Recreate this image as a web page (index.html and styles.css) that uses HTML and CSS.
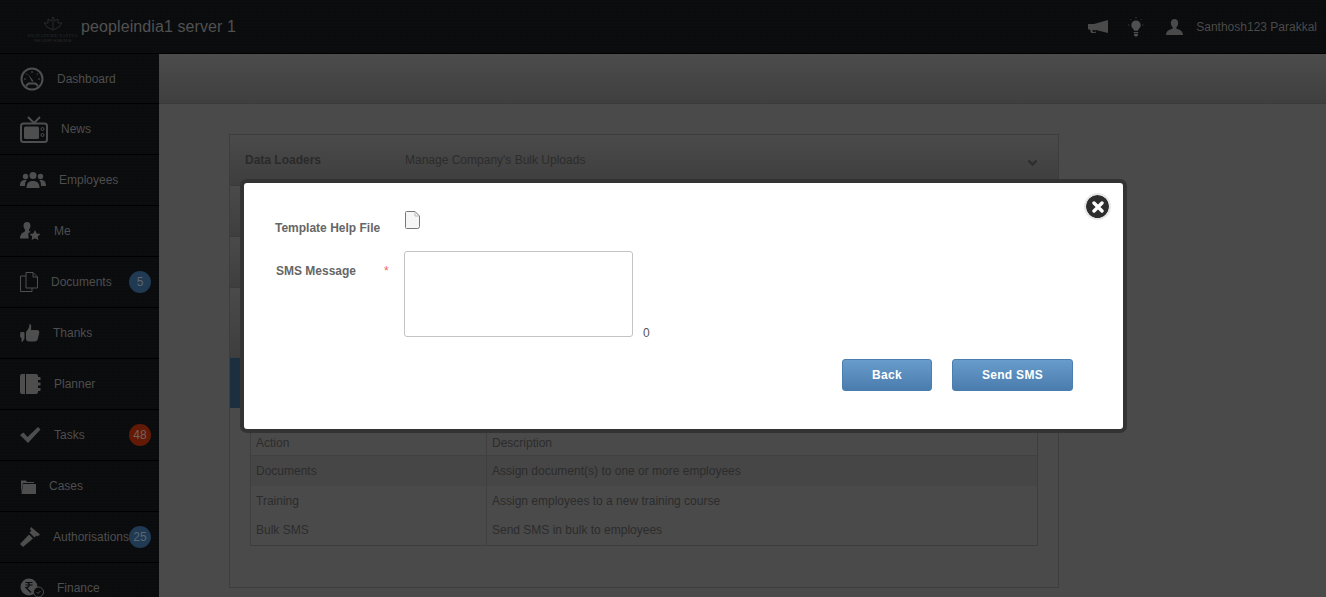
FILE: index.html
```html
<!DOCTYPE html>
<html lang="en">
<head>
<meta charset="UTF-8" />
<title>peopleindia1 server 1</title>
<link rel="stylesheet" href="styles.css">
</head>
<body>
<header class="topbar">
  <div class="logo">
    <svg class="logo-mark" width="18" height="14" viewBox="0 0 18 14"><path d="M9 0l2 4 3-2 0 4 4 0-3 4-6 3-6-3-3-4 4 0 0-4 3 2z" fill="none" stroke="#2b2b2b"/><path d="M9 3v9" stroke="#2b2b2b"/></svg>
    <div class="logo-name">SIGNATURE SATIVA</div>
    <div class="logo-sub">THE LUXURY HOME INDIA</div>
  </div>
  <div class="brand">peopleindia1 server 1</div>
  <div class="top-icons">
    <svg width="20" height="14" viewBox="0 0 20 14"><path d="M20 0v13L8 10H7l1 3H3L2 9.500H0V4h6z" fill="#4a4a4a"/><path d="M4.500 10h2l.7 2H5z" fill="#0a0b0d"/></svg>
    <svg width="16" height="20" viewBox="0 0 16 20"><path d="M8 3.500a4.700 4.700 0 0 0-3 8.300c.7.600 1 1.200 1 2h4c0-.8.300-1.400 1-2a4.700 4.700 0 0 0-3-8.300zM5.700 15h4.600v1.300H5.700zM6 17h4v1.200L9 19.500H7L6 18.200z" fill="#4f4f4f"/><path d="M8 0v2M2.300 2.300l1.300 1.300M13.700 2.300l-1.300 1.300M0 8h2M14 8h2" stroke="#3a3a3a" stroke-dasharray="1 .6"/></svg>
    <svg width="17" height="16" viewBox="0 0 17 16"><path d="M8.500 0c2.400 0 3.700 1.800 3.700 4 0 1.700-.8 3.300-1.800 4.200v1.600c2.500.7 6.600 1.800 6.600 6.200H0c0-4.400 4.100-5.500 6.600-6.200V8.200C5.600 7.300 4.800 5.700 4.800 4c0-2.200 1.300-4 3.700-4z" fill="#4a4a4a"/></svg>
    <span class="user-name">Santhosh123 Parakkal</span>
  </div>
</header>

<div class="layout">
  <nav class="sidebar">
    <a class="nav-item">
      <svg width="24" height="24" viewBox="0 0 24 24"><circle cx="12" cy="12" r="10.500" fill="none" stroke="#4e4e4e" stroke-width="2"/><path d="M8 7l5.500 7-1.500 1z" fill="#4e4e4e"/><path d="M12 4v2M6 6.500l1.300 1.300M18 6.500l-1.300 1.300M4 12h2M18 12h2" stroke="#4e4e4e"/><path d="M6 19l2.500-2.500h7L18 19" fill="none" stroke="#4e4e4e" stroke-width="2"/></svg>
      <span>Dashboard</span>
    </a>
    <a class="nav-item">
      <svg width="28" height="27" viewBox="0 0 28 27"><path d="M8 1l6 6 6-6" fill="none" stroke="#4e4e4e" stroke-width="2"/><rect x="1" y="7.500" width="26" height="18.500" rx="2.500" fill="none" stroke="#4e4e4e" stroke-width="2"/><rect x="4" y="10.500" width="15" height="12.500" rx="1.500" fill="#4e4e4e"/><circle cx="22.500" cy="13" r="1.500" fill="none" stroke="#4e4e4e"/><circle cx="22.500" cy="19" r="1.500" fill="none" stroke="#4e4e4e"/></svg>
      <span>News</span>
    </a>
    <a class="nav-item">
      <svg width="26" height="16" viewBox="0 0 26 16"><circle cx="13" cy="3.500" r="3.500" fill="#4e4e4e"/><path d="M6.500 16c0-4.500 2-7 6.500-7s6.500 2.500 6.500 7z" fill="#4e4e4e"/><circle cx="5.500" cy="4.500" r="2.700" fill="#4e4e4e"/><circle cx="20.500" cy="4.500" r="2.700" fill="#4e4e4e"/><path d="M0 14c0-4 1.500-6 5-6 .8 0 1.200.1 1.700.3C5.400 9.500 5 11.500 5 14zM26 14c0-4-1.500-6-5-6-.8 0-1.200.1-1.700.3 1.300 1.200 1.700 3.200 1.700 5.700z" fill="#4e4e4e"/></svg>
      <span>Employees</span>
    </a>
    <a class="nav-item">
      <svg width="21" height="18" viewBox="0 0 21 18"><path d="M7 0c2.300 0 3.500 1.600 3.500 3.700 0 1.500-.7 2.900-1.500 3.800v1.400l1.700.6-2.500 2 .5 5H0c0-5 3.500-6.400 5-7V7.500C4.200 6.600 3.500 5.200 3.500 3.700 3.500 1.600 4.700 0 7 0z" fill="#4e4e4e"/><path d="M15 8l1.700 3.500 3.800.5-2.800 2.600.7 3.400-3.400-1.800-3.400 1.800.7-3.400L9.500 12l3.800-.5z" fill="#4e4e4e"/></svg>
      <span>Me</span>
    </a>
    <a class="nav-item">
      <svg width="18" height="20" viewBox="0 0 18 20"><path d="M6 .5h7l4.500 4.500v11H6zM13 .5V5h4.500" fill="none" stroke="#4e4e4e"/><path d="M6 4H.5v15.500H12V16" fill="none" stroke="#4e4e4e"/></svg>
      <span>Documents</span>
      <b class="badge badge-blue">5</b>
    </a>
    <a class="nav-item">
      <svg width="20" height="18" viewBox="0 0 20 18"><path d="M9.500 0c1.500 0 2 1.500 1.700 3.500L11 6h6c1.500 0 2.500 1 2.300 2.500l-1.500 6.500c-.3 1.500-1.500 2.500-3 2.500H9c-2 0-3-1-3-3V8c1.500-2 3.500-4 3.500-8z" fill="#4e4e4e"/><path d="M.5 8h3.200L4.500 9v5.500L2.500 18l-1-.5V14c-1-.5-1.500-1.500-1.500-2.500z" fill="#4e4e4e"/></svg>
      <span>Thanks</span>
    </a>
    <a class="nav-item">
      <svg width="21" height="20" viewBox="0 0 21 20"><path d="M2 0h3v20H2a2 2 0 0 1-2-2V2a2 2 0 0 1 2-2zM6 0h10a2 2 0 0 1 2 2v16a2 2 0 0 1-2 2H6z" fill="#4e4e4e"/><path d="M18 3h2.500v3H18zM18 8.500h2.500v3H18zM18 14h2.500v3H18z" fill="#4e4e4e"/></svg>
      <span>Planner</span>
    </a>
    <a class="nav-item">
      <svg width="21" height="16" viewBox="0 0 21 16"><path d="M0 8l3.500-2.500L7.500 10 18 0l2.500 2.500L8 16z" fill="#4e4e4e"/></svg>
      <span>Tasks</span>
      <b class="badge badge-red">48</b>
    </a>
    <a class="nav-item">
      <svg width="16" height="15" viewBox="0 0 16 15"><path d="M1 1.500h5l1 1.500h7v1H3L1 14z" fill="#4e4e4e"/><path d="M3 5h13v10H1.500z" fill="#4e4e4e"/></svg>
      <span>Cases</span>
    </a>
    <a class="nav-item">
      <svg width="20" height="20" viewBox="0 0 20 20"><path d="M11 0l9 7.500-2.500 2-1-1-2 2-5-5 2-2-1.500-1z" fill="#4e4e4e"/><path d="M9 7.500l4 4L3 20l-3-3z" fill="#4e4e4e"/></svg>
      <span>Authorisations</span>
      <b class="badge badge-blue">25</b>
    </a>
    <a class="nav-item">
      <svg width="24" height="20" viewBox="0 0 24 20"><circle cx="9" cy="9" r="8.500" fill="#4e4e4e"/><path d="M5.500 4.500h7M5.500 7h7M7 4.500c3 0 3.500 5-1 5l5 5" fill="none" stroke="#0a0b0d" stroke-width="1.200"/><circle cx="18.500" cy="14" r="5" fill="#0a0b0d" stroke="#4e4e4e"/><path d="M16.500 14l1.500 1.500 2.500-2.500" fill="none" stroke="#4e4e4e"/></svg>
      <span>Finance</span>
    </a>
  </nav>

  <main class="content">
    <div class="subheader"></div>
    <section class="panel">
      <div class="panel-row">
        <strong class="panel-title">Data Loaders</strong>
        <span class="panel-desc">Manage Company's Bulk Uploads</span>
        <svg class="chevron" width="11" height="8" viewBox="0 0 11 8"><path d="M1.500 1.500l4 4 4-4" fill="none" stroke="#2e2e2e" stroke-width="2.400"/></svg>
      </div>
      <div class="panel-row"></div>
      <div class="panel-row"></div>
      <div class="panel-row panel-row-tall"></div>
      <div class="panel-row panel-row-active"></div>
      <table class="actions">
        <tr><th>Action</th><th>Description</th></tr>
        <tr><td>Documents</td><td>Assign document(s) to one or more employees</td></tr>
        <tr><td>Training</td><td>Assign employees to a new training course</td></tr>
        <tr><td>Bulk SMS</td><td>Send SMS in bulk to employees</td></tr>
      </table>
    </section>
  </main>
</div>

<div class="modal">
  <button class="modal-close" type="button" aria-label="Close">
    <svg width="12" height="12" viewBox="0 0 12 12"><path d="M2 2l8 8M10 2l-8 8" stroke="#fff" stroke-width="3.400" stroke-linecap="round"/></svg>
  </button>
  <form class="modal-form">
    <div class="field field-file">
      <label class="field-label">Template Help File</label>
      <svg class="file-icon" width="15" height="18" viewBox="0 0 15 18"><path d="M1.500.5h8.500l4.500 4.500v10.500a2 2 0 0 1-2 2h-11a1 1 0 0 1-1-1V1.500a1 1 0 0 1 1-1z" fill="#f6f6f6" stroke="#777"/><path d="M10 .5V5h4.500" fill="none" stroke="#bbb"/></svg>
    </div>
    <div class="field field-message">
      <label class="field-label">SMS Message</label>
      <span class="required">*</span>
      <textarea class="message-box"></textarea>
      <span class="counter">0</span>
    </div>
    <div class="modal-actions">
      <button class="btn btn-back" type="button">Back</button>
      <button class="btn btn-send" type="button">Send SMS</button>
    </div>
  </form>
</div>
</body>
</html>
```
FILE: styles.css
```css
* {
  box-sizing: border-box;
}
html, body {
  height: 100%;
}
body {
  margin: 0;
  height: 597px;
  overflow: hidden;
  font-family: "Liberation Sans", Arial, sans-serif;
  font-size: 12px;
  background-color: #4a4a4a;
  color: #2c2c2c;
  position: relative;
}

/* top bar */
.topbar {
  height: 54px;
  display: flex;
  align-items: center;
  background-color: #0a0b0d;
  background-image: repeating-linear-gradient(0deg, #0c0d0f 0 1px, transparent 1px 3px), repeating-linear-gradient(90deg, #0c0d0f 0 1px, transparent 1px 3px);
  border-bottom: 1px solid #000;
}
.logo {
  width: 81px;
  margin-left: 0;
  padding-top: 6px;
  padding-left: 24px;
  text-align: center;
  color: #2b2b2b;
  line-height: 1;
  white-space: nowrap;
}
.logo-mark {
  display: block;
  margin: 0 auto 2px;
}
.logo-name {
  font-family: "Liberation Serif", serif;
  font-size: 5px;
  letter-spacing: 0.3px;
}
.logo-sub {
  font-size: 3px;
  margin-top: 2px;
}
.brand {
  font-size: 16px;
  color: #515151;
  font-weight: normal;
  letter-spacing: 0.1px;
}
.top-icons {
  margin-left: auto;
  display: flex;
  align-items: center;
  padding-right: 9px;
}
.top-icons svg:nth-child(1) {
  margin-right: 20px;
}
.top-icons svg:nth-child(2) {
  margin-right: 22px;
}
.user-name {
  margin-left: 13px;
  color: #4a4a4a;
}

.layout {
  display: grid;
  grid-template-columns: 159px 1fr;
}

/* sidebar */
.sidebar {
  background-color: #0a0b0d;
  background-image: repeating-linear-gradient(0deg, #0c0d0f 0 1px, transparent 1px 3px), repeating-linear-gradient(90deg, #0c0d0f 0 1px, transparent 1px 3px);
}
.nav-item {
  height: 51px;
  padding-left: 20px;
  display: flex;
  align-items: center;
  gap: 13px;
  border-bottom: 1px solid #000;
  color: #4e4e4e;
  position: relative;
  white-space: nowrap;
}
.nav-item:first-child {
  height: 50px;
}
.nav-item svg {
  flex: none;
}
.badge {
  position: absolute;
  left: 129px;
  top: 14px;
  width: 22px;
  height: 22px;
  border-radius: 50%;
  text-align: center;
  line-height: 22px;
  font-weight: normal;
  color: #5c6670;
}
.badge-blue {
  background-color: #1f3a52;
}
.badge-red {
  background-color: #621a06;
  color: #74625c;
}

/* page behind the dialog */
.content {
  min-width: 0;
}
.subheader {
  height: 50px;
  background-image: linear-gradient(#4c4c4c, #3f3f3f);
  border-bottom: 1px solid #3b3b3b;
}
.panel {
  width: 830px;
  height: 454px;
  margin: 30px 0 0 70px;
  border: 1px solid #3d3d3d;
}
.panel-row {
  height: 51px;
  display: flex;
  align-items: center;
  padding: 0 20px 0 15px;
  background-image: linear-gradient(#4a4a4a, #3e3e3e);
  border-bottom: 1px solid #3b3b3b;
}
.panel-row-tall {
  height: 70px;
  border-bottom: 0;
}
.panel-row-active {
  height: 50px;
  background-image: none;
  background-color: #1c2f40;
  border-bottom: 0;
}
.panel-title {
  width: 160px;
  font-size: 12px;
  color: #2a2a2a;
}
.panel-desc {
  color: #2c2c2c;
}
.chevron {
  margin-left: auto;
  margin-top: 5px;
}
.actions {
  width: 788px;
  margin: 21px 0 0 20px;
  border-collapse: collapse;
  table-layout: fixed;
  border: 1px solid #3d3d3d;
}
.actions th,
.actions td {
  height: 30px;
  padding: 0 5px;
  text-align: left;
  font-weight: normal;
  color: #2c2c2c;
  border-left: 1px solid #3f3f3f;
}
.actions th {
  height: 26px;
  border-bottom: 1px solid #414141;
}
.actions th:first-child,
.actions td:first-child {
  width: 236px;
}
.actions tr:nth-child(2) td {
  background-color: #464646;
}

/* dialog */
.modal {
  position: absolute;
  left: 240px;
  top: 179px;
  width: 887px;
  height: 254px;
  background-color: #fff;
  border: 4px solid #333;
  border-radius: 7px;
}
.modal-close {
  position: absolute;
  right: 12px;
  top: 10px;
  width: 27px;
  height: 27px;
  padding: 0;
  display: flex;
  align-items: center;
  justify-content: center;
  border-radius: 50%;
  border: 2px solid #e8e8e8;
  background-color: #2d2d2d;
  background-clip: padding-box;
}
.modal-form {
  padding: 28px 50px 0 31px;
}
.field {
  display: flex;
  color: #666;
}
.field-label {
  font-weight: bold;
  color: #666;
}
.field-file {
  height: 40px;
}
.field-file .field-label {
  width: 130px;
  margin-top: 10px;
}
.file-icon {
  display: block;
}
.field-message {
  height: 86px;
  padding-left: 1px;
}
.field-message .field-label {
  width: 108px;
  margin-top: 13px;
}
.required {
  width: 20px;
  margin-top: 13px;
  color: #e66;
}
.message-box {
  width: 229px;
  height: 86px;
  padding: 4px;
  resize: none;
  border: 1px solid #c4c4c4;
  border-radius: 3px;
  background-color: #fff;
}
.counter {
  align-self: flex-end;
  margin-left: 10px;
  color: #555;
  line-height: 14px;
  margin-bottom: -3px;
}
.modal-actions {
  display: flex;
  justify-content: flex-end;
  gap: 20px;
  margin-top: 22px;
}
.btn {
  height: 32px;
  font-family: inherit;
  font-size: 12px;
  font-weight: bold;
  letter-spacing: 0.3px;
  color: #fff;
  background-image: linear-gradient(#689ccb, #4a7dad);
  border: 1px solid #4b7eae;
  border-radius: 3px;
}
.btn-back {
  width: 90px;
}
.btn-send {
  width: 121px;
}
```
